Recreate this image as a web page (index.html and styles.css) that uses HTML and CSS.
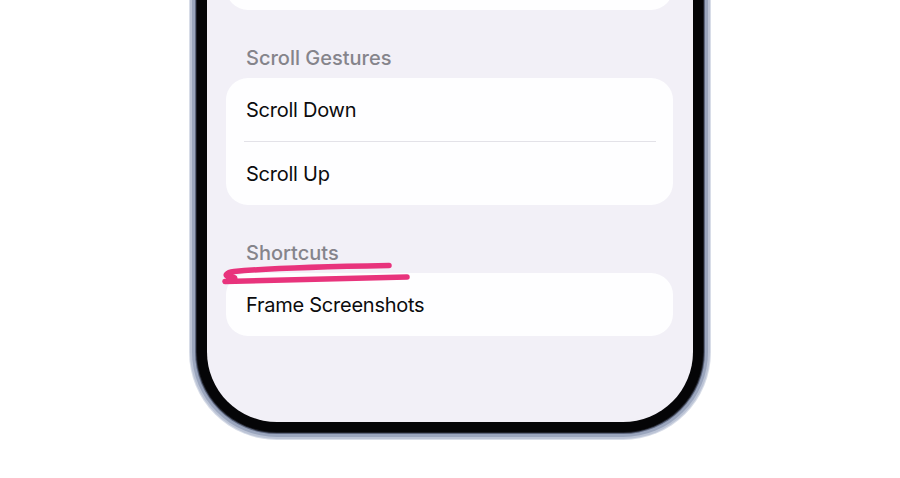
FILE: index.html
```html
<!DOCTYPE html>
<html lang="en">
<head>
    <meta charset="UTF-8">
    <meta name="viewport" content="width=device-width, initial-scale=1.0">
    <title>Settings</title>
    <link rel="stylesheet" href="styles.css">
</head>
<body>
    <div class="stage">
        <div class="phone">
            <div class="screen">
                <div class="card card-top"></div>

                <div class="section-title">Scroll Gestures</div>
                <div class="card">
                    <div class="row">Scroll Down</div>
                    <div class="divider"></div>
                    <div class="row">Scroll Up</div>
                </div>

                <div class="section-title">Shortcuts</div>
                <div class="card">
                    <div class="row">Frame Screenshots</div>
                </div>
            </div>
        </div>

        <!-- marker scribble under the section title -->
        <svg class="scribble" viewBox="0 0 900 478" width="900" height="478">
            <path d="M389 265.5 C 330 266.5 270 268 234 271.5 C 226 272.5 224 276 229 276.5 C 238 277 236 279.5 225 281.5 C 290 280 350 278.5 407 277"
                  fill="none" stroke="#e8337c" stroke-width="5.5" stroke-linecap="round" stroke-linejoin="round"/>
        </svg>
    </div>
</body>
</html>
```

FILE: styles.css
```css
:root {
    --page-bg: #ffffff;
    --screen-bg: #f2f0f7;
    --card-bg: #fefeff;
    --label: #0c0c0e;
    --secondary: #85848b;
    --divider: #e3e2e8;
}

body {
    margin: 0;
    background: var(--page-bg);
    font-family: Inter, "Liberation Sans", sans-serif;
}

.stage {
    position: relative;
    width: 900px;
    height: 478px;
    overflow: hidden;
}

/* black bezel, metal rim drawn with stacked shadows */
.phone {
    width: 486px;
    height: 512px;
    margin: -100px auto 0;
    padding: 10px;
    background: #050507;
    border-radius: 0 0 80px 80px;
    box-shadow:
        0 0 0 1px #1c1e26,
        0 0 0 2px #5d667e,
        0 0 0 5px #9aa5bd,
        0 0 0 7px #bcc4d6,
        0 0 0 8px #d8dde8;
}

.screen {
    height: 100%;
    padding: 0 20px 0 19px;
    background: var(--screen-bg);
    border-radius: 0 0 70px 70px;
    overflow: hidden;
}

.card {
    background: var(--card-bg);
    border-radius: 22px;
}

.card-top {
    height: 80px;
    margin-top: 20px;
}

.section-title {
    margin: 36px 0 8px;
    padding-left: 20px;
    line-height: 24px;
    font-size: 20px;
    font-weight: 500;
    color: var(--secondary);
}

.row {
    display: flex;
    align-items: center;
    height: 63px;
    padding-left: 20px;
    font-size: 20px;
    letter-spacing: -0.25px;
    color: var(--label);
}

.divider {
    height: 1px;
    margin: 0 17px 0 18px;
    background: var(--divider);
}

.scribble {
    position: absolute;
    top: 0;
    left: 0;
    pointer-events: none;
}
```
